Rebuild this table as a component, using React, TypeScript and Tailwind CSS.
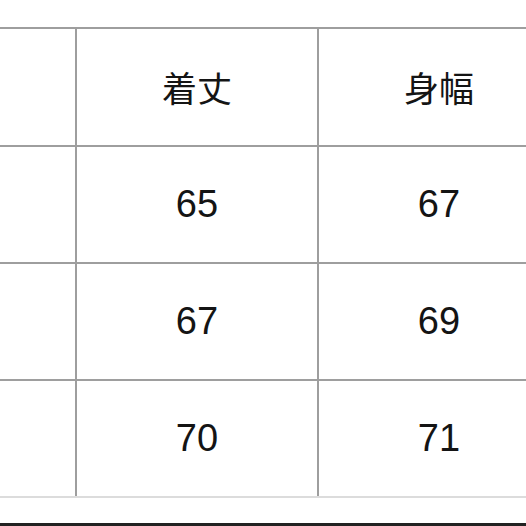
import React from "react";

const rows = [
  ["65", "67"],
  ["67", "69"],
  ["70", "71"],
];

export default function App() {
  return (
    <div className="w-[526px] h-[526px] overflow-hidden bg-white flex flex-col">
      <div className="h-[27px] shrink-0" />
      <div className="flex flex-col w-[600px] shrink-0">
        <div className="flex h-[118px] border-t-2 border-[#9e9e9e]">
          <div className="w-[75px] shrink-0" />
          <div
            className="w-[242px] shrink-0 border-l-2 border-[#9e9e9e] flex items-center justify-center text-[35px] font-normal text-[#141414]"
            style={{ fontFamily: '"Noto Sans CJK JP", sans-serif' }}
          >
            着丈
          </div>
          <div
            className="w-[242px] shrink-0 border-l-2 border-[#9e9e9e] flex items-center justify-center text-[35px] font-normal text-[#141414]"
            style={{ fontFamily: '"Noto Sans CJK JP", sans-serif' }}
          >
            身幅
          </div>
        </div>
        {rows.map((r, i) => (
          <div key={i} className="flex h-[117px] border-t-2 border-[#9e9e9e]">
            <div className="w-[75px] shrink-0" />
            <div className="w-[242px] shrink-0 border-l-2 border-[#9e9e9e] flex items-center justify-center text-[38px] text-[#141414] font-['Liberation_Sans',sans-serif]">
              {r[0]}
            </div>
            <div className="w-[242px] shrink-0 border-l-2 border-[#9e9e9e] flex items-center justify-center text-[38px] text-[#141414] font-['Liberation_Sans',sans-serif]">
              {r[1]}
            </div>
          </div>
        ))}
        <div className="h-[2px] bg-[#dcdcdc]" />
      </div>
      <div className="flex-1" />
      <div className="h-[3px] shrink-0 bg-[#222222]" />
    </div>
  );
}
